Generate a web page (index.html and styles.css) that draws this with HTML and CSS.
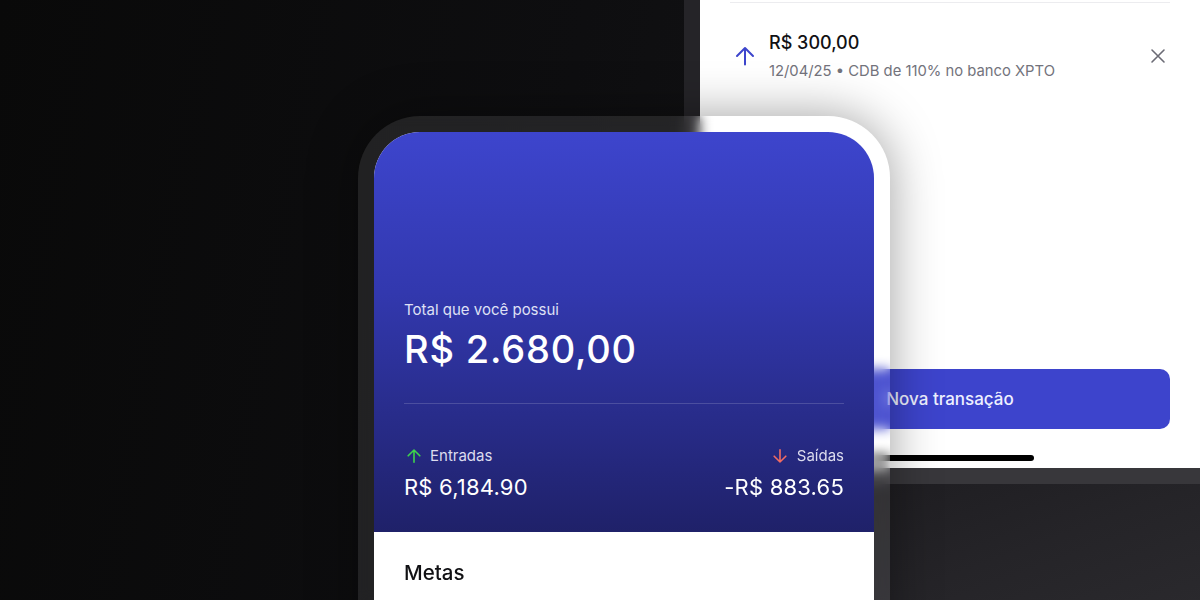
FILE: index.html
```html
<!DOCTYPE html>
<html lang="pt-BR">
<head>
<meta charset="utf-8">
<title>Finanças</title>
<link rel="stylesheet" href="styles.css">
</head>
<body>
<main class="stage">
  <div class="device device-back">
    <div class="back-bezel">
      <div class="back-screen">
        <div class="list-divider"></div>
        <div class="tx-row">
          <svg class="tx-icon" width="20" height="20" viewBox="0 0 20 20" fill="none" stroke="#3d45cc" stroke-width="2" stroke-linecap="round" stroke-linejoin="round"><path d="M10 18.5V2M2 10l8-8 8 8"/></svg>
          <div class="tx-info">
            <div class="tx-amount">R$ 300,00</div>
            <div class="tx-meta">12/04/25 • CDB de 110% no banco XPTO</div>
          </div>
          <svg class="tx-close" width="24" height="24" viewBox="0 0 24 24" fill="none" stroke="#6b6b75" stroke-width="1.6" stroke-linecap="round"><path d="M18 6 6 18M6 6l12 12"/></svg>
        </div>
        <div class="grow"></div>
        <button class="new-tx">Nova transação</button>
        <div class="home-indicator"></div>
      </div>
    </div>
    <div class="back-body"></div>
  </div>

  <div class="device device-front">
    <div class="front-screen">
      <section class="hero">
        <p class="hero-label">Total que você possui</p>
        <p class="hero-total">R$ 2.680,00</p>
        <div class="hero-divider"></div>
        <div class="flows">
          <div class="flow">
            <div class="flow-label">
              <svg width="14" height="14" viewBox="0 0 14 14" fill="none" stroke="#3ed44c" stroke-width="1.6" stroke-linecap="round" stroke-linejoin="round"><path d="M7 13.2V1M1.2 6.8 7 1l5.8 5.8"/></svg>
              <span>Entradas</span>
            </div>
            <div class="flow-value">R$ 6,184.90</div>
          </div>
          <div class="flow flow-out">
            <div class="flow-label">
              <svg width="14" height="14" viewBox="0 0 14 14" fill="none" stroke="#f26b62" stroke-width="1.6" stroke-linecap="round" stroke-linejoin="round"><path d="M7 0.8V13M1.2 7.2 7 13l5.8-5.8"/></svg>
              <span>Saídas</span>
            </div>
            <div class="flow-value">-R$ 883.65</div>
          </div>
        </div>
      </section>
      <section class="goals">
        <h2 class="goals-title">Metas</h2>
      </section>
    </div>
  </div>
</main>
</body>
</html>
```

FILE: styles.css
```css
* { box-sizing: border-box; }

html, body {
  margin: 0;
  padding: 0;
}

body {
  width: 1200px;
  height: 600px;
  overflow: hidden;
  font-family: "Inter", "Noto Sans", sans-serif;
  background: linear-gradient(100deg, #090909 0%, #0e0e10 45%, #18181a 100%);
}

.stage {
  position: relative;
  width: 1200px;
  height: 600px;
  overflow: hidden;
}

/* ---------- back device ---------- */
.device-back {
  position: absolute;
  left: 684px;
  top: -40px;
  width: 560px;
  height: 700px;
  display: flex;
  flex-direction: column;
}

.back-bezel {
  height: 524px;
  border-left: 16px solid #252428;
  border-bottom: 16px solid #38373b;
}

.back-screen {
  height: 100%;
  width: 500px;
  background: #ffffff;
  display: flex;
  flex-direction: column;
  padding: 42px 30px 7px;
}

.list-divider {
  height: 1px;
  background: #ececef;
}

.tx-row {
  display: flex;
  align-items: center;
  padding-top: 28px;
}

.tx-icon {
  flex: none;
  margin: 0 14px 0 5px;
}

.tx-info {
  flex: 1;
}

.tx-amount {
  font-size: 18px;
  line-height: 24px;
  font-weight: 500;
  color: #111114;
}

.tx-meta {
  margin-top: 6px;
  font-size: 14.8px;
  line-height: 20px;
  color: #73737c;
}

.tx-close {
  flex: none;
}

.grow { flex: 1; }

.new-tx {
  height: 60px;
  border: 0;
  border-radius: 10px;
  background: #3d44cc;
  color: #eef0ff;
  font-family: inherit;
  font-size: 17px;
  font-weight: 500;
}

.home-indicator {
  margin: 26px auto 0;
  width: 168px;
  height: 6px;
  border-radius: 3px;
  background: #000;
}

.back-body {
  flex: 1;
  background: linear-gradient(160deg, #1b1a1e 0%, #252428 50%, #2d2c30 100%);
}

/* ---------- front device ---------- */
.device-front {
  position: absolute;
  left: 358px;
  top: 116px;
  width: 532px;
  height: 640px;
  padding: 16px 16px 0;
  border-radius: 62px 62px 0 0;
  background: rgba(255, 255, 255, 0.09);
  -webkit-backdrop-filter: blur(6px);
  backdrop-filter: blur(6px);
  box-shadow: 0 0 50px rgba(0, 0, 0, 0.38);
}

.front-screen {
  height: 100%;
  border-radius: 46px 46px 0 0;
  overflow: hidden;
  background: #fff;
  display: flex;
  flex-direction: column;
}

.hero {
  height: 400px;
  flex: none;
  background: linear-gradient(180deg, #3d45cd 0%, #3238ae 40%, #1f2169 100%);
  display: flex;
  flex-direction: column;
  justify-content: flex-end;
  padding: 0 30px 31px;
  color: #fff;
}

.hero-label {
  margin: 0;
  font-size: 15px;
  line-height: 20px;
  color: #dfe0f5;
}

.hero-total {
  margin: 6px 0 0;
  font-size: 38px;
  line-height: 46px;
  font-weight: 500;
  letter-spacing: 0.8px;
  color: #ffffff;
}

.hero-divider {
  margin-top: 31px;
  height: 1px;
  background: rgba(255, 255, 255, 0.16);
}

.flows {
  margin-top: 42px;
  display: flex;
  justify-content: space-between;
}

.flow {
  display: flex;
  flex-direction: column;
  gap: 7px;
}

.flow-out {
  align-items: flex-end;
}

.flow-label {
  display: flex;
  align-items: center;
  gap: 9px;
  padding-left: 3px;
  font-size: 15px;
  line-height: 20px;
  color: #dcdcee;
}

.flow-out .flow-label {
  gap: 10px;
  padding-left: 0;
}

.flow-value {
  font-size: 22px;
  line-height: 28px;
  letter-spacing: 0.2px;
  color: #ffffff;
}

.goals {
  flex: 1;
  background: #fff;
  padding: 27px 30px 0;
}

.goals-title {
  margin: 0;
  font-size: 20.5px;
  line-height: 28px;
  font-weight: 500;
  color: #111114;
}
```
